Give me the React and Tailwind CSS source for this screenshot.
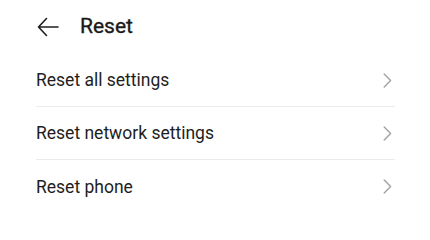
import React from 'react';

const items = ["Reset all settings", "Reset network settings", "Reset phone"];

function Chevron() {
  return (
    <svg width="9" height="15" viewBox="0 0 9 15" fill="none" className="shrink-0">
      <path d="M1.2 1 L7.6 7.5 L1.2 14" stroke="#a3a3a3" strokeWidth="1.4" strokeLinecap="round" strokeLinejoin="round" />
    </svg>
  );
}

export default function App() {
  return (
    <div className="w-[430px] h-[216px] bg-white overflow-hidden" style={{ fontFamily: 'Roboto, "Noto Sans", sans-serif' }}>
      <div className="h-[54px] flex items-center pl-[37px]">
        <svg width="22" height="20" viewBox="0 0 22 20" fill="none" className="shrink-0">
          <path d="M21 10 H1.5 M9.5 1.5 L1.5 10 L9.5 18.5" stroke="#1f1f1f" strokeWidth="1.6" strokeLinecap="round" strokeLinejoin="round" />
        </svg>
        <h1 className="ml-[21px] text-[21px] font-normal [-webkit-text-stroke:0.35px_#1a1a1a] text-[#1a1a1a] leading-none -mt-[2px]">Reset</h1>
      </div>
      <div className="pl-[36px] pr-[35px]">
        {items.map((item, i) => (
          <div
            key={item}
            className={`h-[53px] flex items-center justify-between ${i < items.length - 1 ? 'border-b border-[#ebebeb]' : ''}`}
          >
            <span className="text-[17.5px] text-[#1e1e1e] leading-none mt-[2px]">{item}</span>
            <div className="mr-[3px]">
              <Chevron />
            </div>
          </div>
        ))}
      </div>
    </div>
  );
}
